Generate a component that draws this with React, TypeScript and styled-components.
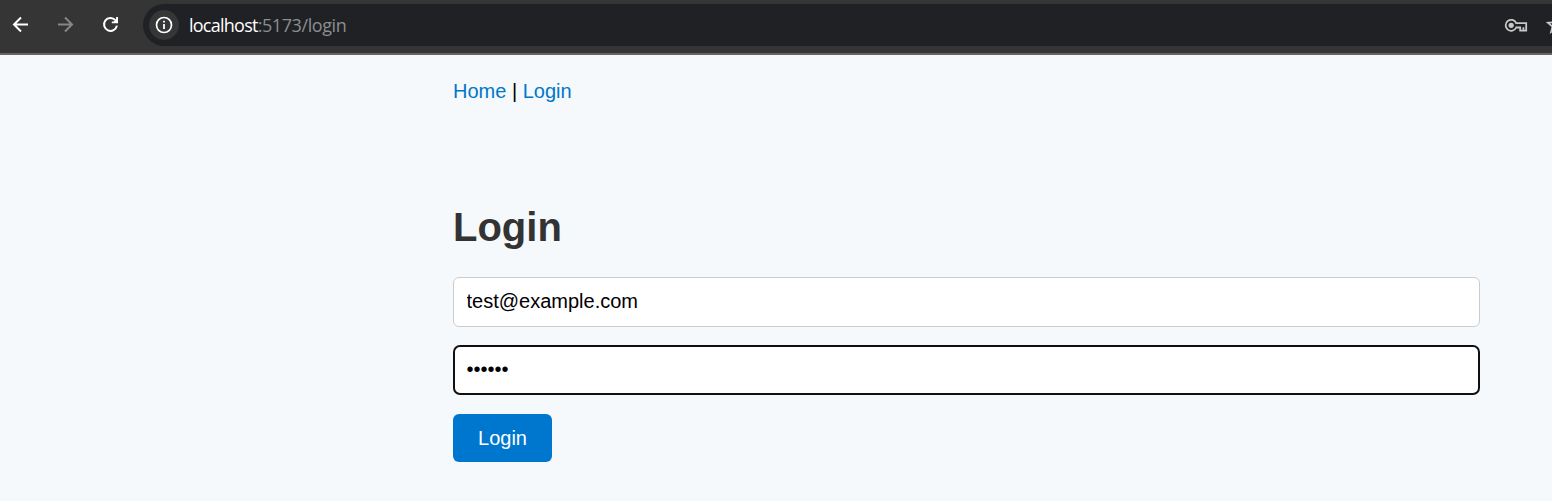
import React from "react";
import styled, { createGlobalStyle } from "styled-components";

const GlobalStyle = createGlobalStyle`
  * { box-sizing: border-box; }
  html, body { margin: 0; padding: 0; }
  body {
    background: #f5f9fc;
    font-family: "Liberation Sans", Arial, sans-serif;
    font-size: 20px;
    color: #000;
    overflow: hidden;
  }
`;

const Window = styled.div`
  height: 501px;
  overflow: hidden;
`;

const Toolbar = styled.header`
  display: flex;
  align-items: flex-start;
  height: 55px;
  padding-top: 4px;
  background: #353535;
  border-bottom: 2px solid #646464;
`;

const NavButtons = styled.div`
  display: flex;
  align-items: center;
  gap: 21px;
  width: 143px;
  height: 42px;
  padding-left: 9px;
  flex: none;
`;

const Icon = styled.svg`
  display: block;
  flex: none;
`;

const AddressBar = styled.div`
  display: flex;
  align-items: center;
  flex: 1;
  height: 42px;
  padding-left: 6px;
  background: #202124;
  border-radius: 21px 0 0 21px;
  overflow: hidden;
`;

const SiteInfo = styled.span`
  display: flex;
  align-items: center;
  justify-content: center;
  width: 30px;
  height: 30px;
  border-radius: 50%;
  background: #353638;
`;

const Url = styled.span`
  display: flex;
  flex: 1;
  margin-left: 10px;
  font-family: "Open Sans", "Noto Sans", sans-serif;
  font-size: 18px;
  line-height: 26px;
  color: #8b8e92;
`;

const Host = styled.span`
  color: #fff;
  letter-spacing: -0.75px;
`;

const Path = styled.span`
  letter-spacing: -0.42px;
`;

const BarActions = styled.div`
  display: flex;
  align-items: center;
  gap: 17px;
  width: 48px;
  flex: none;
`;

const Page = styled.main`
  display: flex;
  flex-direction: column;
  align-items: flex-start;
  width: 1027px;
  margin-left: 453px;
  padding-top: 24px;
`;

const Nav = styled.nav`
  line-height: 24px;
  white-space: pre;
`;

const NavLink = styled.a`
  color: #0077c8;
  text-decoration: none;
`;

const Title = styled.h1`
  margin: 101px 0 27px;
  font-size: 40px;
  line-height: 46px;
  font-weight: 700;
  color: #333;
`;

const Form = styled.form`
  display: flex;
  flex-direction: column;
  align-items: flex-start;
  width: 100%;
`;

const Field = styled.input<{ $active?: boolean }>`
  width: 100%;
  height: 50px;
  margin: 0 0 ${(p) => (p.$active ? 19 : 18)}px;
  padding: 0 12px 2px ${(p) => (p.$active ? 11.5 : 12.5)}px;
  border: ${(p) => (p.$active ? "2px solid #101010" : "1px solid #ccc")};
  border-radius: ${(p) => (p.$active ? 7 : 6)}px;
  background: #fff;
  color: #000;
  font: inherit;
  outline: none;
`;

const SubmitButton = styled.button`
  width: 99px;
  height: 48px;
  padding: 0;
  border: 0;
  border-radius: 6px;
  background: #0077cf;
  color: #fff;
  font: inherit;
`;

export default function App() {
  return (
    <Window>
      <GlobalStyle />
      <Toolbar>
        <NavButtons>
          <Icon width="24" height="24" viewBox="0 0 24 24" fill="none" stroke="#fff" strokeWidth="2">
            <path d="M19 11.5H5.5M12 4.5L5 11.5L12 18.5" />
          </Icon>
          <Icon width="24" height="24" viewBox="0 0 24 24" fill="none" stroke="#868686" strokeWidth="2">
            <path d="M4 11.5H17.5M11 4.5L18 11.5L11 18.5" />
          </Icon>
          <Icon width="24" height="24" viewBox="0 0 24 24" fill="none" stroke="#fff" strokeWidth="2">
            <path d="M16.4 7.1A6.5 6.5 0 1 0 17.9 12.6" />
            <path d="M19 4V10.2H12.8V8.4H14.8L17.1 6.1V4Z" fill="#fff" stroke="none" />
          </Icon>
        </NavButtons>
        <AddressBar>
          <SiteInfo>
            <Icon width="18" height="18" viewBox="0 0 18 18" fill="none" stroke="#fff">
              <circle cx="9" cy="9" r="7.5" strokeWidth="1.7" />
              <path d="M9 8V13M9 4.8V6.6" strokeWidth="1.8" />
            </Icon>
          </SiteInfo>
          <Url>
            <Host>localhost</Host>
            <Path>:5173/login</Path>
          </Url>
          <BarActions>
            <Icon width="25" height="16" viewBox="0 0 25 16" fill="none" stroke="#c7c7c7" strokeWidth="1.8">
              <path d="M12.2 6.1A5.5 5.5 0 1 0 12.2 10.5H16.2V13.6H22.2V6.1Z" />
              <circle cx="7.2" cy="8.3" r="2.6" fill="#c7c7c7" stroke="none" />
              <path d="M19.4 13.5V10.2" />
            </Icon>
            <Icon width="20" height="20" viewBox="0 0 20 20" fill="none" stroke="#c7c7c7" strokeWidth="1.7">
              <path d="M10 2L12.2 7.3L18 7.8L13.6 11.5L15 17.2L10 14.2L5 17.2L6.4 11.5L2 7.8L7.8 7.3Z" />
            </Icon>
          </BarActions>
        </AddressBar>
      </Toolbar>
      <Page>
        <Nav>
          <NavLink>Home</NavLink> | <NavLink>Login</NavLink>
        </Nav>
        <Title>Login</Title>
        <Form onSubmit={(e) => e.preventDefault()}>
          <Field type="email" defaultValue="test@example.com" />
          <Field type="password" defaultValue="secret" $active />
          <SubmitButton type="submit">Login</SubmitButton>
        </Form>
      </Page>
    </Window>
  );
}
